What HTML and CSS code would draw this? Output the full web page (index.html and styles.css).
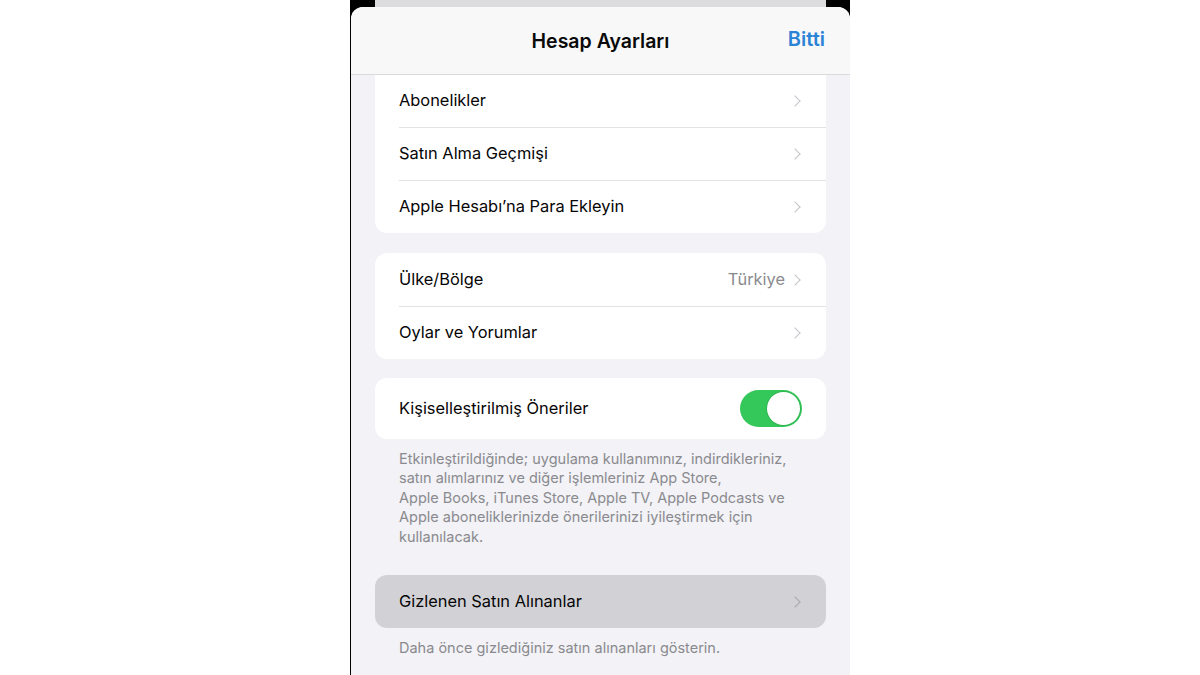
FILE: index.html
```html
<!DOCTYPE html>
<html lang="tr">
<head>
  <meta charset="UTF-8">
  <meta name="viewport" content="width=device-width, initial-scale=1.0">
  <title>Hesap Ayarları</title>
  <link rel="stylesheet" href="styles.css">
</head>
<body>

<div class="phone">
  <div class="peek"></div>

  <div class="sheet">
    <div class="nav">
      <span class="nav-title">Hesap Ayarları</span>
      <span class="nav-done">Bitti</span>
    </div>

    <div class="content">
      <div class="group group-cut">
        <div class="row">
          <span class="label">Abonelikler</span>
          <span class="chevron"></span>
        </div>
        <div class="row">
          <span class="label">Satın Alma Geçmişi</span>
          <span class="chevron"></span>
        </div>
        <div class="row">
          <span class="label">Apple Hesabı’na Para Ekleyin</span>
          <span class="chevron"></span>
        </div>
      </div>

      <div class="group">
        <div class="row">
          <span class="label">Ülke/Bölge</span>
          <span class="value">Türkiye</span>
          <span class="chevron"></span>
        </div>
        <div class="row">
          <span class="label">Oylar ve Yorumlar</span>
          <span class="chevron"></span>
        </div>
      </div>

      <div class="group group-flush">
        <div class="row row-tall">
          <span class="label">Kişiselleştirilmiş Öneriler</span>
          <span class="switch on"><span class="knob"></span></span>
        </div>
      </div>
      <p class="note">
        Etkinleştirildiğinde; uygulama kullanımınız, indirdikleriniz,<br>
        satın alımlarınız ve diğer işlemleriniz App Store,<br>
        Apple Books, iTunes Store, Apple TV, Apple Podcasts ve<br>
        Apple aboneliklerinizde önerilerinizi iyileştirmek için<br>
        kullanılacak.
      </p>

      <div class="group group-flush group-pressed">
        <div class="row">
          <span class="label">Gizlenen Satın Alınanlar</span>
          <span class="chevron"></span>
        </div>
      </div>
      <p class="note">Daha önce gizlediğiniz satın alınanları gösterin.</p>
    </div>
  </div>
</div>

</body>
</html>
```

FILE: styles.css
```css
body {
  margin: 0;
  background: #fff;
  font-family: Inter, "Noto Sans", sans-serif;
  overflow: hidden;
}

.phone {
  width: 499px;
  height: 675px;
  margin: 0 auto;
  padding-left: 1px;
  background: #000;
  display: flex;
  flex-direction: column;
}

/* the card sitting behind the sheet */
.peek {
  height: 7px;
  margin: 0 24px;
  background: #dcdcde;
  flex-shrink: 0;
}

.sheet {
  flex: 1;
  background: #f2f2f7;
  border-radius: 12px 12px 0 0;
  overflow: hidden;
  display: flex;
  flex-direction: column;
}

.nav {
  height: 67px;
  flex-shrink: 0;
  background: #f8f8f9;
  border-bottom: 1px solid #dadadc;
  display: flex;
  align-items: center;
  justify-content: center;
  position: relative;
}

.nav-title {
  font-size: 19.5px;
  font-weight: 600;
  color: #0a0a0a;
}

.nav-done {
  position: absolute;
  right: 25px;
  top: 20px;
  font-size: 20px;
  font-weight: 600;
  color: #2a83d6;
}

.content {
  padding: 0 24px;
}

.group {
  background: #fff;
  border-radius: 12px;
  margin-bottom: 19px;
  overflow: hidden;
}

.group-cut {
  border-radius: 0 0 12px 12px;
  margin-top: -1px;
  margin-bottom: 20px;
}

.group-flush {
  margin-bottom: 0;
}

.group-pressed {
  background: #d2d2d6;
}

.group-pressed .chevron {
  border-color: #a8a8ad;
}

.row {
  height: 53px;
  display: flex;
  align-items: center;
  padding: 0 24px;
  position: relative;
}

.row + .row::before {
  content: "";
  position: absolute;
  top: 0;
  left: 24px;
  right: 0;
  height: 1px;
  background: #e3e3e6;
}

.row-tall {
  height: 61px;
}

.label {
  flex: 1;
  font-size: 16.4px;
  color: #050505;
  margin-top: -1px;
}

.value {
  font-size: 16.4px;
  color: #8a8a8e;
  margin-right: 6px;
  margin-top: -1px;
}

.chevron {
  width: 7px;
  height: 7px;
  border-top: 1.8px solid #c4c4c8;
  border-right: 1.8px solid #c4c4c8;
  transform: rotate(45deg);
  margin-right: 3px;
}

.switch {
  width: 62px;
  height: 37px;
  border-radius: 19px;
  background: #e9e9eb;
  display: flex;
  align-items: center;
  padding: 2px;
  box-sizing: border-box;
}

.switch.on {
  background: #34c759;
  justify-content: flex-end;
}

.knob {
  width: 33px;
  height: 33px;
  border-radius: 50%;
  background: #fff;
  box-shadow: 0 0 0 1px rgba(0, 0, 0, 0.08);
}

.note {
  margin: 0;
  padding: 10px 24px 29px;
  font-size: 14.5px;
  line-height: 19.4px;
  color: #8a8a8e;
  white-space: nowrap;
}
```
